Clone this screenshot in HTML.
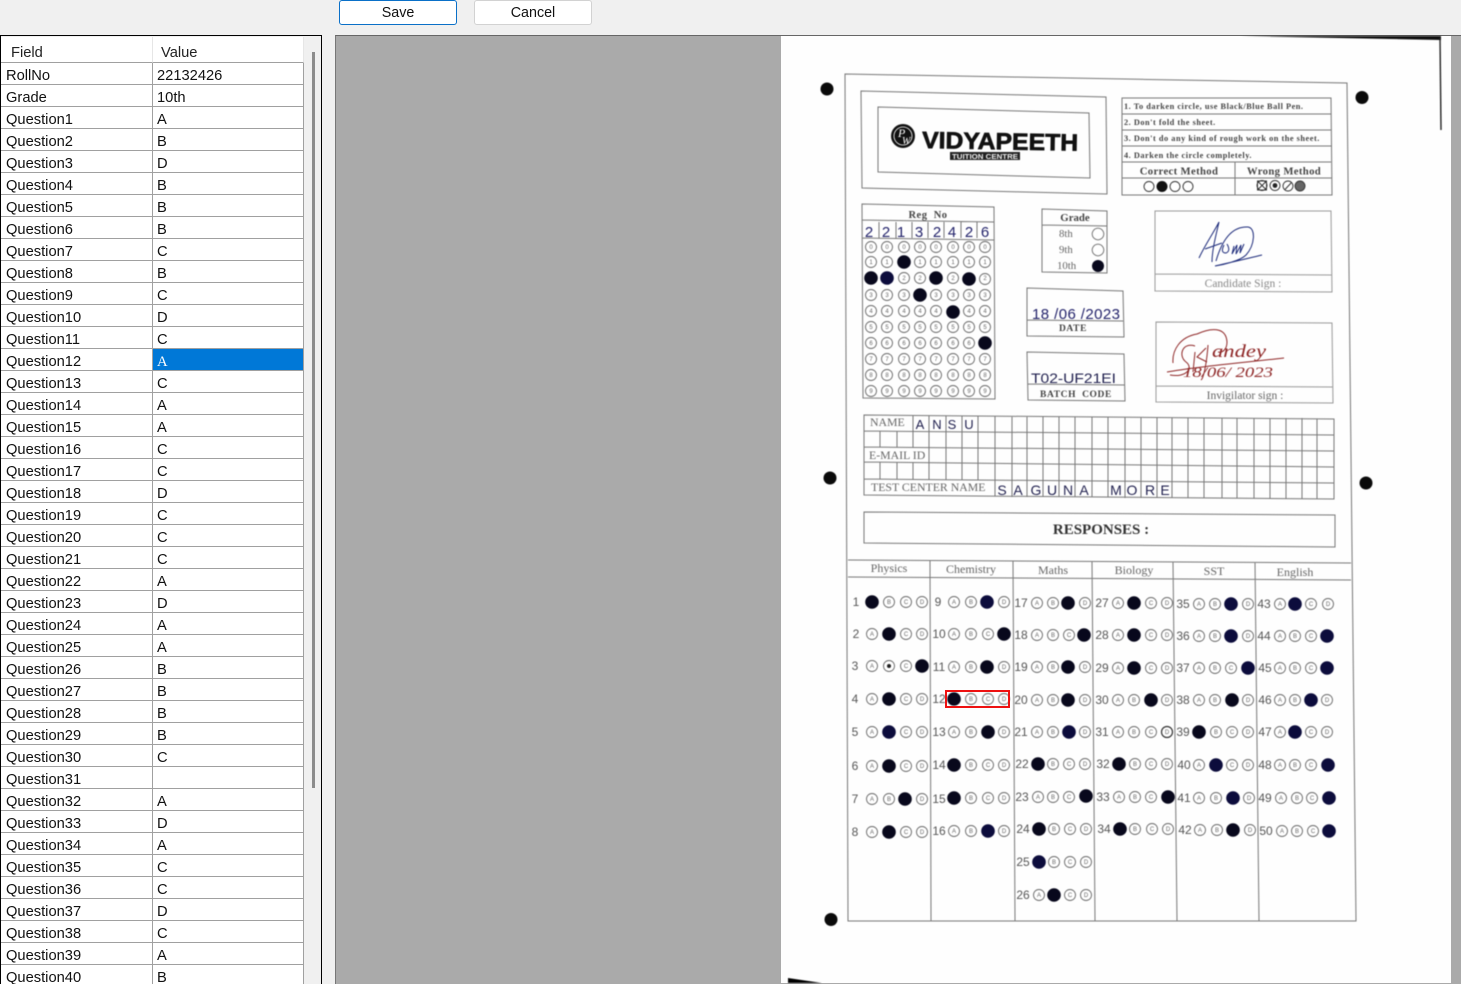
<!DOCTYPE html>
<html><head><meta charset="utf-8"><title>OMR Review</title>
<style>
html,body{margin:0;padding:0;width:1461px;height:984px;overflow:hidden;background:#f0f0f0;font-family:"Liberation Sans",sans-serif}
#root{position:relative;width:1461px;height:984px;overflow:hidden;background:#f0f0f0}
.btn{position:absolute;top:0;width:118px;height:25px;box-sizing:border-box;background:#fff;border-radius:3px;text-align:center;font-size:14.3px;line-height:25px;color:#111}
#frame{position:absolute;left:0;top:35px;width:322px;height:949px;box-sizing:border-box;border:1px solid #000;border-width:1px 1px 0 1px;background:#f0f0f0}
#clip{position:absolute;left:1px;top:37px;width:303px;height:947px;overflow:hidden}
table{position:absolute;left:0;top:0;border-collapse:separate;border-spacing:0;table-layout:fixed;width:303px;background:#fff;font-size:14.7px;color:#111}
td,th{box-sizing:border-box;height:22px;padding:5px 0 0 5px;border-bottom:1px solid #a0a0a0;border-right:1px solid #a0a0a0;white-space:nowrap;overflow:hidden;font-weight:normal;text-align:left;line-height:16px}
td+td{padding-left:4px}
th{height:26px;padding:6px 0 0 10px;border-right:1px solid #e6e6e6;color:#222;line-height:14px}
th+th{padding-left:8px;border-right:1px solid #e6e6e6}
td.s{background:#0078d7;color:#fff}
#thumb{position:absolute;left:312px;top:52px;width:3px;height:736px;background:#8c8c8c}
#panel{position:absolute;left:335px;top:35px;width:1126px;height:949px;background:#aaa;border-top:1px solid #666;border-left:1px solid #777;box-sizing:border-box}
#sheet{position:absolute;left:781px;top:36px;width:670px;height:947px;background:#fefefe}
svg{position:absolute;left:0;top:0}
circle{r:5.5px;fill:#fff;stroke:#6a6a6a;stroke-width:.9}
circle.f{r:6.8px;fill:#08081c;stroke:none}
circle.b{r:6.8px;fill:#0c0c3c;stroke:none}
circle.d{r:6.5px;fill:#0a0a0a;stroke:none}
.l{font:6px "Liberation Sans",sans-serif;fill:#666;text-anchor:middle}
.n{font:12px "Liberation Sans",sans-serif;fill:#555;text-anchor:middle}
.ln{stroke:#777;stroke-width:1;fill:none}
.lt{stroke:#999;stroke-width:1;fill:none}
.s{font-family:"Liberation Serif",serif;fill:#666}
.sb{font-family:"Liberation Serif",serif;font-weight:bold;fill:#444}
.h{font-family:"Liberation Sans",sans-serif;fill:#22226a}
.m{text-anchor:middle}
</style></head><body>
<div id="root">
<div class="btn" style="left:339px;border:1.5px solid #0a70c8">Save</div>
<div class="btn" style="left:474px;border:1px solid #d2d2d2">Cancel</div>
<div id="frame"></div>
<div id="clip">
<table>
<colgroup><col style="width:152px"><col style="width:151px"></colgroup>
<tr><th>Field</th><th>Value</th></tr>
<tr><td>RollNo</td><td>22132426</td></tr>
<tr><td>Grade</td><td>10th</td></tr>
<tr><td>Question1</td><td>A</td></tr>
<tr><td>Question2</td><td>B</td></tr>
<tr><td>Question3</td><td>D</td></tr>
<tr><td>Question4</td><td>B</td></tr>
<tr><td>Question5</td><td>B</td></tr>
<tr><td>Question6</td><td>B</td></tr>
<tr><td>Question7</td><td>C</td></tr>
<tr><td>Question8</td><td>B</td></tr>
<tr><td>Question9</td><td>C</td></tr>
<tr><td>Question10</td><td>D</td></tr>
<tr><td>Question11</td><td>C</td></tr>
<tr><td>Question12</td><td class="s">A</td></tr>
<tr><td>Question13</td><td>C</td></tr>
<tr><td>Question14</td><td>A</td></tr>
<tr><td>Question15</td><td>A</td></tr>
<tr><td>Question16</td><td>C</td></tr>
<tr><td>Question17</td><td>C</td></tr>
<tr><td>Question18</td><td>D</td></tr>
<tr><td>Question19</td><td>C</td></tr>
<tr><td>Question20</td><td>C</td></tr>
<tr><td>Question21</td><td>C</td></tr>
<tr><td>Question22</td><td>A</td></tr>
<tr><td>Question23</td><td>D</td></tr>
<tr><td>Question24</td><td>A</td></tr>
<tr><td>Question25</td><td>A</td></tr>
<tr><td>Question26</td><td>B</td></tr>
<tr><td>Question27</td><td>B</td></tr>
<tr><td>Question28</td><td>B</td></tr>
<tr><td>Question29</td><td>B</td></tr>
<tr><td>Question30</td><td>C</td></tr>
<tr><td>Question31</td><td></td></tr>
<tr><td>Question32</td><td>A</td></tr>
<tr><td>Question33</td><td>D</td></tr>
<tr><td>Question34</td><td>A</td></tr>
<tr><td>Question35</td><td>C</td></tr>
<tr><td>Question36</td><td>C</td></tr>
<tr><td>Question37</td><td>D</td></tr>
<tr><td>Question38</td><td>C</td></tr>
<tr><td>Question39</td><td>A</td></tr>
<tr><td>Question40</td><td>B</td></tr>
</table>
</div>
<div id="thumb"></div>
<div id="panel"></div>
<div id="sheet"></div>
<svg width="1461" height="984" viewBox="0 0 1461 984" xmlns="http://www.w3.org/2000/svg">
<g style="filter:blur(.45px)">
<!-- page edges -->
<path d="M1240 36 L1441 36 L1441 40 L1390 39 Z" fill="#111"/>
<path d="M1440 37 L1441 130" stroke="#222" stroke-width="1.4" fill="none"/>
<path d="M788 978 L788 983 L822 983 Z" fill="#000"/>
<!-- registration dots -->
<circle class="d" cx="827" cy="89" style="r:6.5px"/><circle class="d" cx="1362" cy="97.500" style="r:6.5px"/><circle class="d" cx="830" cy="478" style="r:6.5px"/><circle class="d" cx="1366" cy="483" style="r:6.5px"/><circle class="d" cx="831" cy="919.500" style="r:6.5px"/>
<!-- outer frame -->
<path class="ln" d="M845 74 L1347 83 L1356 921 L848 921 Z"/>
<!-- logo box -->
<path class="ln" d="M861 91 L1106 97 L1107 194 L862 188 Z"/>
<path class="ln" d="M878 107 L1089 113 L1090 178 L878 172 Z"/>
<circle cx="903" cy="136" style="r:12px;fill:#111;stroke:none"/>
<circle cx="903" cy="136" style="r:9px;fill:none;stroke:#fff;stroke-width:.8"/>
<text x="898" y="137" font-family="Liberation Serif" font-size="12" fill="#fff" font-style="italic">P</text>
<text x="902" y="144" font-family="Liberation Serif" font-size="10" fill="#fff" font-style="italic">W</text>
<text x="922" y="148" font-family="Liberation Sans" font-weight="bold" font-size="23.500" fill="#111" stroke="#111" stroke-width=".7" textLength="156" lengthAdjust="spacingAndGlyphs" transform="rotate(1 922 148)">VIDYAPEETH</text>
<rect x="950" y="152" width="70" height="8" fill="#222"/>
<text x="985" y="159" font-family="Liberation Sans" font-weight="bold" font-size="7.500" fill="#eee" text-anchor="middle" textLength="66" lengthAdjust="spacingAndGlyphs">TUITION CENTRE</text>
<!-- instructions -->
<path class="ln" d="M1122 98 H1331 L1332 195 H1122 Z M1122 114 H1331 M1122 130 H1331 M1122 146 H1331 M1122 162 H1331 M1122 178 H1332 M1235 162 V195"/>
<g class="sb" font-size="8.300" letter-spacing=".52">
<text x="1124" y="109">1. To darken circle, use Black/Blue Ball Pen.</text>
<text x="1124" y="125">2. Don't fold the sheet.</text>
<text x="1124" y="141">3. Don't do any kind of rough work on the sheet.</text>
<text x="1124" y="158">4. Darken the circle completely.</text>
</g>
<g class="sb" font-size="10.700" letter-spacing=".35">
<text x="1179" y="174.500" class="m">Correct Method</text>
<text x="1284" y="174.500" class="m">Wrong Method</text>
</g>
<circle cx="1149" cy="186.500" style="r:5px;stroke:#333"/><circle cx="1162" cy="186.500" style="r:5.500px;fill:#111;stroke:none"/><circle cx="1175" cy="186.500" style="r:5px;stroke:#333"/><circle cx="1188" cy="186.500" style="r:5px;stroke:#333"/>
<circle cx="1262" cy="185.500" style="r:5px;stroke:#333"/><path d="M1258.500 182 L1265.500 189 M1265.500 182 L1258.500 189 M1257.500 181 H1266.500 V190 H1257.500 Z" stroke="#333" fill="none"/>
<circle cx="1275" cy="185.500" style="r:5px;stroke:#333"/><circle cx="1275" cy="185.500" style="r:2.400px;fill:#222;stroke:none"/>
<circle cx="1288" cy="186" style="r:5px;stroke:#333"/><path d="M1285 189.500 L1291.500 182.500" stroke="#333" fill="none"/>
<circle cx="1300" cy="186" style="r:5px;fill:#666;stroke:#333"/>
<!-- candidate sign -->
<path class="lt" d="M1155 211 L1331 211 L1332 292 L1155 291 Z M1155 274 L1332 275"/>
<path d="M1199 258 C1205 245 1214 232 1219 222 C1216 235 1212 250 1212 262 M1205 249 L1222 243 M1216 261 C1222 240 1232 226 1248 227 C1256 228 1255 245 1246 255 C1240 261 1222 265 1215 266 C1228 263 1250 258 1262 255 M1224 245 q-4 8 2 8 q5 -2 1 -9 M1234 246 l-2 8 l5 -9 l-1 9 l5 -9 l-1 8 l4 -9" fill="none" stroke="#1c2a7a" stroke-width="1"/>
<text x="1243" y="287" class="s m" font-size="11.500" style="fill:#888">Candidate Sign :</text>
<!-- invigilator -->
<path class="lt" d="M1156 322 L1332 323 L1333 403 L1156 402 Z M1156 386 L1333 387"/>
<path d="M1173 363 C1172 350 1180 337 1197 334 C1210 328 1226 326 1227 342 C1227 350 1222 353 1218 352 M1195 346 C1182 342 1178 356 1186 362 C1194 368 1186 378 1170 375 M1195 352 L1193 372 M1206 348 L1197 357 L1207 362 M1208 345 C1207 360 1204 378 1201 380 M1167 372 C1200 366 1250 362 1284 358" fill="none" stroke="#8e2626" stroke-width="1"/>
<text x="1212" y="357" font-family="Liberation Serif" font-style="italic" font-size="18" fill="#8e2626" textLength="54" lengthAdjust="spacingAndGlyphs">andey</text>
<text x="1183" y="377" font-family="Liberation Serif" font-style="italic" font-size="15" fill="#8e2626" textLength="90" lengthAdjust="spacingAndGlyphs">18/06/ 2023</text>
<text x="1245" y="399" class="s m" font-size="11.500">Invigilator sign :</text>
<!-- reg no -->
<path class="ln" d="M862 204 L994 207 L995 399 L863 398 Z M862 220 L994 222 M862 238 L994 240 M879 222 V238 M896 222 V238 M912 222 V238 M928 222 V238 M944 222 V238 M961 222 V238 M977 222 V238"/>
<text x="928" y="218" class="sb m" font-size="10.500" letter-spacing=".5">Reg&#160; No</text>
<text class="h" font-size="15" y="237" x="869 886 901 919 937 952 969 985" text-anchor="middle">22132426</text>
<circle cx="871" cy="247"/><circle cx="887" cy="247"/><circle cx="904" cy="247"/><circle cx="920" cy="247"/><circle cx="936" cy="247"/><circle cx="953" cy="247"/><circle cx="969" cy="247"/><circle cx="985" cy="247"/>
<circle cx="871" cy="262"/><circle cx="887" cy="262"/><circle class="f" cx="904" cy="262"/><circle cx="920" cy="262"/><circle cx="936" cy="262"/><circle cx="953" cy="262"/><circle cx="969" cy="262"/><circle cx="985" cy="262"/>
<circle class="f" cx="871" cy="278"/><circle class="b" cx="887" cy="278"/><circle cx="904" cy="278"/><circle cx="920" cy="278"/><circle class="f" cx="936" cy="278"/><circle cx="953" cy="278"/><circle class="f" cx="969" cy="279"/><circle cx="985" cy="279"/>
<circle cx="871" cy="295"/><circle cx="887" cy="295"/><circle cx="904" cy="295"/><circle class="f" cx="920" cy="295"/><circle cx="936" cy="295"/><circle cx="953" cy="295"/><circle cx="969" cy="295"/><circle cx="985" cy="295"/>
<circle cx="871" cy="311"/><circle cx="887" cy="311"/><circle cx="904" cy="311"/><circle cx="920" cy="311"/><circle cx="936" cy="311"/><circle class="f" cx="953" cy="312"/><circle cx="969" cy="311"/><circle cx="985" cy="311"/>
<circle cx="871" cy="327"/><circle cx="887" cy="327"/><circle cx="904" cy="327"/><circle cx="920" cy="327"/><circle cx="936" cy="327"/><circle cx="953" cy="327"/><circle cx="969" cy="327"/><circle cx="985" cy="327"/>
<circle cx="871" cy="343"/><circle cx="887" cy="343"/><circle cx="904" cy="343"/><circle cx="920" cy="343"/><circle cx="936" cy="343"/><circle cx="953" cy="343"/><circle cx="969" cy="343"/><circle class="f" cx="985" cy="343"/>
<circle cx="871" cy="359"/><circle cx="887" cy="359"/><circle cx="904" cy="359"/><circle cx="920" cy="359"/><circle cx="936" cy="359"/><circle cx="953" cy="359"/><circle cx="969" cy="359"/><circle cx="985" cy="359"/>
<circle cx="871" cy="375"/><circle cx="887" cy="375"/><circle cx="904" cy="375"/><circle cx="920" cy="375"/><circle cx="936" cy="375"/><circle cx="953" cy="375"/><circle cx="969" cy="375"/><circle cx="985" cy="375"/>
<circle cx="871" cy="391"/><circle cx="887" cy="391"/><circle cx="904" cy="391"/><circle cx="920" cy="391"/><circle cx="936" cy="391"/><circle cx="953" cy="391"/><circle cx="969" cy="391"/><circle cx="985" cy="391"/>
<text class="l" y="249" x="871 887 904 920 936 953 969 985">00000000</text>
<text class="l" y="264" x="871 887 920 936 953 969 985">1111111</text>
<text class="l" y="280" x="904 920 953 985">2222</text>
<text class="l" y="297" x="871 887 904 936 953 969 985">3333333</text>
<text class="l" y="313" x="871 887 904 920 936 969 985">4444444</text>
<text class="l" y="329" x="871 887 904 920 936 953 969 985">55555555</text>
<text class="l" y="345" x="871 887 904 920 936 953 969">6666666</text>
<text class="l" y="361" x="871 887 904 920 936 953 969 985">77777777</text>
<text class="l" y="377" x="871 887 904 920 936 953 969 985">88888888</text>
<text class="l" y="393" x="871 887 904 920 936 953 969 985">99999999</text>
<!-- grade -->
<path class="ln" d="M1042 209 L1107 211 V273 L1042 272 Z M1042 225 L1107 226"/>
<text x="1075" y="221" class="sb m" font-size="10.800">Grade</text>
<g class="s" font-size="10.800"><text x="1059" y="237">8th</text><text x="1059" y="253">9th</text><text x="1057" y="269">10th</text></g>
<circle cx="1098" cy="234" style="r:5.800px"/><circle cx="1098" cy="250" style="r:5.800px"/><circle class="f" cx="1098" cy="266" style="r:6px"/>
<!-- date -->
<path class="ln" d="M1027 288 L1123 291 L1124 337 L1027 336 Z M1027 320 L1123 321"/>
<text x="1032" y="319" class="h" font-size="15" textLength="88" lengthAdjust="spacing">18 /06 /2023</text>
<text x="1073" y="331" class="sb m" font-size="9.500" letter-spacing=".6">DATE</text>
<!-- batch -->
<path class="ln" d="M1027 352 L1124 354 L1125 401 L1028 400 Z M1028 384 L1125 385"/>
<text x="1031" y="383" class="h" font-size="14" textLength="85" lengthAdjust="spacingAndGlyphs" style="fill:#222250">T02-UF21EI</text>
<text x="1076" y="397" class="sb m" font-size="9.500" letter-spacing=".6">BATCH&#160; CODE</text>
<!-- name grid -->
<path class="ln" d="M864 415 L1334 419 V499 L864 495 Z M864 431 L1334 435 M864 447 L1334 451 M864 462 L1334 467 M864 479 L1334 483"/>
<path class="ln" d="M913 415 V431 M880 431 V447 M897 431 V447 M913 431 V447 M929 416 V447 M880 462 V479 M897 462 V479 M913 462 V479 M929 447 V480 M946 416 V480 M962 416 V480 M978 416 V480 M995 416 V496 M1012 417 V497 M1027 417 V497 M1043 417 V497 M1059 417 V497 M1075 417 V497 M1092 417 V497 M1108 417 V497 M1125 417 V498 M1141 417 V498 M1157 418 V498 M1172 418 V498 M1188 418 V498 M1204 418 V498 M1222 418 V498 M1237 418 V498 M1254 418 V498 M1270 418 V499 M1286 418 V499 M1302 418 V499 M1317 419 V499"/>
<g class="s" font-size="11.800"><text x="870" y="426">NAME</text><text x="869" y="459">E-MAIL ID</text><text x="871" y="491">TEST CENTER NAME</text></g>
<text class="h" font-size="13" y="429" x="920 937 952 969" text-anchor="middle" style="fill:#222250">ANSU</text>
<text class="h" font-size="14" y="495" x="1002 1018 1036 1052 1068 1084 1116 1132 1150 1165" text-anchor="middle" style="fill:#222250">SAGUNAMORE</text>
<!-- responses -->
<path class="ln" d="M864 512 L1335 515 V547 L864 543 Z"/>
<text x="1101" y="534" class="sb m" font-size="15" style="fill:#333">RESPONSES :</text>
<!-- response table -->
<path class="ln" d="M848 560 L1351 563 M848 577 L1351 580 M930 560 L931 921 M1013 561 L1015 921 M1092 561 L1095 921 M1173 562 L1177 921 M1255 562 L1259 921"/>
<g class="s m" font-size="12"><text x="889" y="572">Physics</text><text x="971" y="573">Chemistry</text><text x="1053" y="574">Maths</text><text x="1134" y="574">Biology</text><text x="1214" y="575">SST</text><text x="1295" y="576">English</text></g>
<!-- Physics -->
<text class="n" x="856" y="606">1</text><circle class="f" cx="872" cy="602"/><circle cx="889" cy="602"/><circle cx="906" cy="602"/><circle cx="922" cy="602"/><text class="l" y="604" x="889 906 922">BCD</text>
<text class="n" x="856" y="638">2</text><circle cx="872" cy="634"/><circle class="f" cx="889" cy="634"/><circle cx="906" cy="634"/><circle cx="922" cy="634"/><text class="l" y="636" x="872 906 922">ACD</text>
<text class="n" x="855" y="670">3</text><circle cx="872" cy="666"/><circle cx="889" cy="666"/><circle cx="906" cy="666"/><circle class="f" cx="922" cy="666"/><text class="l" y="668" x="872 906">AC</text><circle cx="889" cy="666" style="r:2px;fill:#222;stroke:none"/>
<text class="n" x="855" y="703">4</text><circle cx="872" cy="699"/><circle class="f" cx="889" cy="699"/><circle cx="906" cy="699"/><circle cx="922" cy="699"/><text class="l" y="701" x="872 906 922">ACD</text>
<text class="n" x="855" y="736">5</text><circle cx="872" cy="732"/><circle class="b" cx="889" cy="732"/><circle cx="906" cy="732"/><circle cx="922" cy="732"/><text class="l" y="734" x="872 906 922">ACD</text>
<text class="n" x="855" y="770">6</text><circle cx="872" cy="766"/><circle class="f" cx="889" cy="766"/><circle cx="906" cy="766"/><circle cx="922" cy="766"/><text class="l" y="768" x="872 906 922">ACD</text>
<text class="n" x="855" y="803">7</text><circle cx="872" cy="799"/><circle cx="889" cy="799"/><circle class="f" cx="905" cy="799"/><circle cx="922" cy="799"/><text class="l" y="801" x="872 889 922">ABD</text>
<text class="n" x="855" y="836">8</text><circle cx="872" cy="832"/><circle class="f" cx="889" cy="832"/><circle cx="906" cy="832"/><circle cx="922" cy="832"/><text class="l" y="834" x="872 906 922">ACD</text>
<!-- Chemistry -->
<text class="n" x="938" y="606">9</text><circle cx="954" cy="602"/><circle cx="971" cy="602"/><circle class="b" cx="987" cy="602"/><circle cx="1004" cy="602"/><text class="l" y="604" x="954 971 1004">ABD</text>
<text class="n" x="939" y="638">10</text><circle cx="954" cy="634"/><circle cx="971" cy="634"/><circle cx="988" cy="634"/><circle class="f" cx="1004" cy="634"/><text class="l" y="636" x="954 971 988">ABC</text>
<text class="n" x="939" y="671">11</text><circle cx="954" cy="667"/><circle cx="971" cy="667"/><circle class="f" cx="987" cy="667"/><circle cx="1004" cy="667"/><text class="l" y="669" x="954 971 1004">ABD</text>
<text class="n" x="939" y="703">12</text><circle class="f" cx="954" cy="699"/><circle cx="971" cy="699"/><circle cx="988" cy="699"/><circle cx="1004" cy="699"/><text class="l" y="701" x="971 988 1004">BCD</text>
<text class="n" x="939" y="736">13</text><circle cx="954" cy="732"/><circle cx="971" cy="732"/><circle class="f" cx="988" cy="732"/><circle cx="1004" cy="732"/><text class="l" y="734" x="954 971 1004">ABD</text>
<text class="n" x="939" y="769">14</text><circle class="f" cx="954" cy="765"/><circle cx="971" cy="765"/><circle cx="988" cy="765"/><circle cx="1004" cy="765"/><text class="l" y="767" x="971 988 1004">BCD</text>
<text class="n" x="939" y="803">15</text><circle class="f" cx="954" cy="798"/><circle cx="971" cy="798"/><circle cx="988" cy="798"/><circle cx="1004" cy="798"/><text class="l" y="800" x="971 988 1004">BCD</text>
<text class="n" x="939" y="835">16</text><circle cx="954" cy="831"/><circle cx="971" cy="831"/><circle class="b" cx="988" cy="831"/><circle cx="1004" cy="831"/><text class="l" y="833" x="954 971 1004">ABD</text>
<!-- Maths -->
<text class="n" x="1021" y="607">17</text><circle cx="1037" cy="603"/><circle cx="1053" cy="603"/><circle class="f" cx="1068" cy="603"/><circle cx="1085" cy="603"/><text class="l" y="605" x="1037 1053 1085">ABD</text>
<text class="n" x="1021" y="639">18</text><circle cx="1037" cy="635"/><circle cx="1053" cy="635"/><circle cx="1069" cy="635"/><circle class="f" cx="1084" cy="635"/><text class="l" y="637" x="1037 1053 1069">ABC</text>
<text class="n" x="1021" y="671">19</text><circle cx="1037" cy="667"/><circle cx="1053" cy="667"/><circle class="f" cx="1068" cy="667"/><circle cx="1085" cy="667"/><text class="l" y="669" x="1037 1053 1085">ABD</text>
<text class="n" x="1021" y="704">20</text><circle cx="1037" cy="700"/><circle cx="1053" cy="700"/><circle class="f" cx="1068" cy="700"/><circle cx="1085" cy="700"/><text class="l" y="702" x="1037 1053 1085">ABD</text>
<text class="n" x="1021" y="736">21</text><circle cx="1037" cy="732"/><circle cx="1053" cy="732"/><circle class="b" cx="1069" cy="732"/><circle cx="1085" cy="732"/><text class="l" y="734" x="1037 1053 1085">ABD</text>
<text class="n" x="1022" y="768">22</text><circle class="f" cx="1038" cy="764"/><circle cx="1053" cy="764"/><circle cx="1069" cy="764"/><circle cx="1085" cy="764"/><text class="l" y="766" x="1053 1069 1085">BCD</text>
<text class="n" x="1022" y="801">23</text><circle cx="1038" cy="797"/><circle cx="1053" cy="797"/><circle cx="1069" cy="797"/><circle class="f" cx="1086" cy="796"/><text class="l" y="799" x="1038 1053 1069">ABC</text>
<text class="n" x="1023" y="833">24</text><circle class="f" cx="1039" cy="829"/><circle cx="1054" cy="829"/><circle cx="1070" cy="829"/><circle cx="1086" cy="829"/><text class="l" y="831" x="1054 1070 1086">BCD</text>
<text class="n" x="1023" y="866">25</text><circle class="b" cx="1039" cy="862"/><circle cx="1054" cy="862"/><circle cx="1070" cy="862"/><circle cx="1086" cy="862"/><text class="l" y="864" x="1054 1070 1086">BCD</text>
<text class="n" x="1023" y="899">26</text><circle cx="1039" cy="895"/><circle class="f" cx="1054" cy="895"/><circle cx="1070" cy="895"/><circle cx="1086" cy="895"/><text class="l" y="897" x="1039 1070 1086">ACD</text>
<!-- Biology -->
<text class="n" x="1102" y="607">27</text><circle cx="1118" cy="603"/><circle class="f" cx="1134" cy="603"/><circle cx="1151" cy="603"/><circle cx="1167" cy="603"/><text class="l" y="605" x="1118 1151 1167">ACD</text>
<text class="n" x="1102" y="639">28</text><circle cx="1118" cy="635"/><circle class="f" cx="1134" cy="635"/><circle cx="1151" cy="635"/><circle cx="1167" cy="635"/><text class="l" y="637" x="1118 1151 1167">ACD</text>
<text class="n" x="1102" y="672">29</text><circle cx="1118" cy="668"/><circle class="f" cx="1134" cy="668"/><circle cx="1151" cy="668"/><circle cx="1167" cy="668"/><text class="l" y="670" x="1118 1151 1167">ACD</text>
<text class="n" x="1102" y="704">30</text><circle cx="1118" cy="700"/><circle cx="1134" cy="700"/><circle class="f" cx="1151" cy="700"/><circle cx="1167" cy="700"/><text class="l" y="702" x="1118 1134 1167">ABD</text>
<text class="n" x="1102" y="736">31</text><circle cx="1118" cy="732"/><circle cx="1134" cy="732"/><circle cx="1151" cy="732"/><circle cx="1167" cy="732" style="stroke:#333;stroke-width:1.200"/><text class="l" y="734" x="1118 1134 1151 1167">ABCD</text>
<text class="n" x="1103" y="768">32</text><circle class="f" cx="1119" cy="764"/><circle cx="1135" cy="764"/><circle cx="1151" cy="764"/><circle cx="1167" cy="764"/><text class="l" y="766" x="1135 1151 1167">BCD</text>
<text class="n" x="1103" y="801">33</text><circle cx="1119" cy="797"/><circle cx="1135" cy="797"/><circle cx="1151" cy="797"/><circle class="f" cx="1168" cy="797"/><text class="l" y="799" x="1119 1135 1151">ABC</text>
<text class="n" x="1104" y="833">34</text><circle class="f" cx="1120" cy="829"/><circle cx="1135" cy="829"/><circle cx="1152" cy="829"/><circle cx="1168" cy="829"/><text class="l" y="831" x="1135 1152 1168">BCD</text>
<!-- SST -->
<text class="n" x="1183" y="608">35</text><circle cx="1199" cy="604"/><circle cx="1215" cy="604"/><circle class="b" cx="1231" cy="604"/><circle cx="1248" cy="604"/><text class="l" y="606" x="1199 1215 1248">ABD</text>
<text class="n" x="1183" y="640">36</text><circle cx="1199" cy="636"/><circle cx="1215" cy="636"/><circle class="b" cx="1231" cy="636"/><circle cx="1248" cy="636"/><text class="l" y="638" x="1199 1215 1248">ABD</text>
<text class="n" x="1183" y="672">37</text><circle cx="1199" cy="668"/><circle cx="1215" cy="668"/><circle cx="1231" cy="668"/><circle class="b" cx="1248" cy="668"/><text class="l" y="670" x="1199 1215 1231">ABC</text>
<text class="n" x="1183" y="704">38</text><circle cx="1199" cy="700"/><circle cx="1215" cy="700"/><circle class="f" cx="1232" cy="700"/><circle cx="1248" cy="700"/><text class="l" y="702" x="1199 1215 1248">ABD</text>
<text class="n" x="1183" y="736">39</text><circle class="f" cx="1199" cy="732"/><circle cx="1216" cy="732"/><circle cx="1232" cy="732"/><circle cx="1248" cy="732"/><text class="l" y="734" x="1216 1232 1248">BCD</text>
<text class="n" x="1184" y="769">40</text><circle cx="1199" cy="765"/><circle class="b" cx="1216" cy="765"/><circle cx="1232" cy="765"/><circle cx="1248" cy="765"/><text class="l" y="767" x="1199 1232 1248">ACD</text>
<text class="n" x="1184" y="802">41</text><circle cx="1199" cy="798"/><circle cx="1216" cy="798"/><circle class="b" cx="1233" cy="798"/><circle cx="1249" cy="798"/><text class="l" y="800" x="1199 1216 1249">ABD</text>
<text class="n" x="1185" y="834">42</text><circle cx="1200" cy="830"/><circle cx="1217" cy="830"/><circle class="f" cx="1233" cy="830"/><circle cx="1250" cy="830"/><text class="l" y="832" x="1200 1217 1250">ABD</text>
<!-- English -->
<text class="n" x="1264" y="608">43</text><circle cx="1280" cy="604"/><circle class="b" cx="1295" cy="604"/><circle cx="1311" cy="604"/><circle cx="1328" cy="604"/><text class="l" y="606" x="1280 1311 1328">ACD</text>
<text class="n" x="1264" y="640">44</text><circle cx="1280" cy="636"/><circle cx="1295" cy="636"/><circle cx="1311" cy="636"/><circle class="b" cx="1327" cy="636"/><text class="l" y="638" x="1280 1295 1311">ABC</text>
<text class="n" x="1265" y="672">45</text><circle cx="1280" cy="668"/><circle cx="1295" cy="668"/><circle cx="1311" cy="668"/><circle class="b" cx="1327" cy="668"/><text class="l" y="670" x="1280 1295 1311">ABC</text>
<text class="n" x="1265" y="704">46</text><circle cx="1280" cy="700"/><circle cx="1295" cy="700"/><circle class="b" cx="1311" cy="700"/><circle cx="1327" cy="700"/><text class="l" y="702" x="1280 1295 1327">ABD</text>
<text class="n" x="1265" y="736">47</text><circle cx="1280" cy="732"/><circle class="b" cx="1295" cy="732"/><circle cx="1311" cy="732"/><circle cx="1327" cy="732"/><text class="l" y="734" x="1280 1311 1327">ACD</text>
<text class="n" x="1265" y="769">48</text><circle cx="1280" cy="765"/><circle cx="1295" cy="765"/><circle cx="1311" cy="765"/><circle class="b" cx="1328" cy="765"/><text class="l" y="767" x="1280 1295 1311">ABC</text>
<text class="n" x="1265" y="802">49</text><circle cx="1281" cy="798"/><circle cx="1297" cy="798"/><circle cx="1312" cy="798"/><circle class="b" cx="1329" cy="798"/><text class="l" y="800" x="1281 1297 1312">ABC</text>
<text class="n" x="1266" y="835">50</text><circle cx="1282" cy="831"/><circle cx="1297" cy="831"/><circle cx="1313" cy="831"/><circle class="b" cx="1329" cy="831"/><text class="l" y="833" x="1282 1297 1313">ABC</text>
</g>
<!-- highlight -->
<rect x="946" y="691" width="63" height="16" fill="none" stroke="#ee1111" stroke-width="2"/>
</svg>
</div>
</body></html>
